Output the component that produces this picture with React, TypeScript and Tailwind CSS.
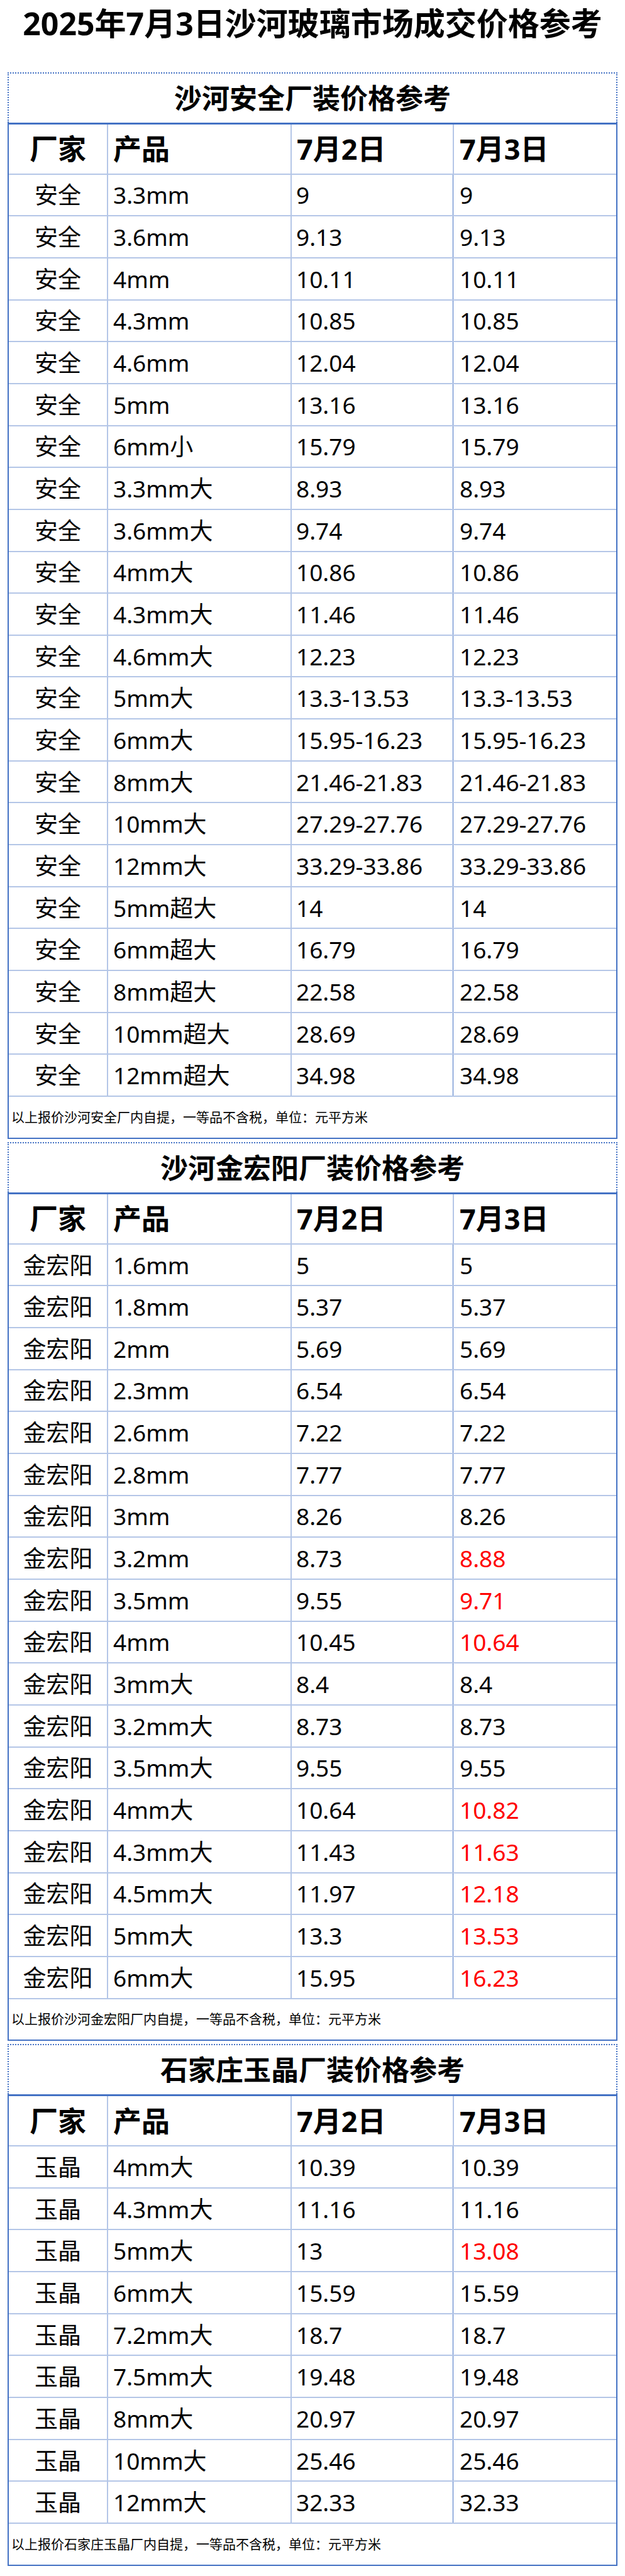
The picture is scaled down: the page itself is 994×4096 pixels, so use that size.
type Row = [string, string, string, boolean?]

interface Section {
  title: string
  maker: string
  note: string
  rows: Row[]
}

const sections: Section[] = [
  {
    title: '沙河安全厂装价格参考',
    maker: '安全',
    note: '以上报价沙河安全厂内自提，一等品不含税，单位：元平方米',
    rows: [
      ['3.3mm', '9', '9'],
      ['3.6mm', '9.13', '9.13'],
      ['4mm', '10.11', '10.11'],
      ['4.3mm', '10.85', '10.85'],
      ['4.6mm', '12.04', '12.04'],
      ['5mm', '13.16', '13.16'],
      ['6mm小', '15.79', '15.79'],
      ['3.3mm大', '8.93', '8.93'],
      ['3.6mm大', '9.74', '9.74'],
      ['4mm大', '10.86', '10.86'],
      ['4.3mm大', '11.46', '11.46'],
      ['4.6mm大', '12.23', '12.23'],
      ['5mm大', '13.3-13.53', '13.3-13.53'],
      ['6mm大', '15.95-16.23', '15.95-16.23'],
      ['8mm大', '21.46-21.83', '21.46-21.83'],
      ['10mm大', '27.29-27.76', '27.29-27.76'],
      ['12mm大', '33.29-33.86', '33.29-33.86'],
      ['5mm超大', '14', '14'],
      ['6mm超大', '16.79', '16.79'],
      ['8mm超大', '22.58', '22.58'],
      ['10mm超大', '28.69', '28.69'],
      ['12mm超大', '34.98', '34.98'],
    ],
  },
  {
    title: '沙河金宏阳厂装价格参考',
    maker: '金宏阳',
    note: '以上报价沙河金宏阳厂内自提，一等品不含税，单位：元平方米',
    rows: [
      ['1.6mm', '5', '5'],
      ['1.8mm', '5.37', '5.37'],
      ['2mm', '5.69', '5.69'],
      ['2.3mm', '6.54', '6.54'],
      ['2.6mm', '7.22', '7.22'],
      ['2.8mm', '7.77', '7.77'],
      ['3mm', '8.26', '8.26'],
      ['3.2mm', '8.73', '8.88', true],
      ['3.5mm', '9.55', '9.71', true],
      ['4mm', '10.45', '10.64', true],
      ['3mm大', '8.4', '8.4'],
      ['3.2mm大', '8.73', '8.73'],
      ['3.5mm大', '9.55', '9.55'],
      ['4mm大', '10.64', '10.82', true],
      ['4.3mm大', '11.43', '11.63', true],
      ['4.5mm大', '11.97', '12.18', true],
      ['5mm大', '13.3', '13.53', true],
      ['6mm大', '15.95', '16.23', true],
    ],
  },
  {
    title: '石家庄玉晶厂装价格参考',
    maker: '玉晶',
    note: '以上报价石家庄玉晶厂内自提，一等品不含税，单位：元平方米',
    rows: [
      ['4mm大', '10.39', '10.39'],
      ['4.3mm大', '11.16', '11.16'],
      ['5mm大', '13', '13.08', true],
      ['6mm大', '15.59', '15.59'],
      ['7.2mm大', '18.7', '18.7'],
      ['7.5mm大', '19.48', '19.48'],
      ['8mm大', '20.97', '20.97'],
      ['10mm大', '25.46', '25.46'],
      ['12mm大', '32.33', '32.33'],
    ],
  },
]

function PriceSection({ section }: { section: Section }) {
  return (
    <div>
      {/* section heading */}
      <div className="h-[80px] border-2 border-b-0 border-dotted border-[#4472c4] flex items-center justify-center text-[44px] font-bold leading-none text-black">
        {section.title}
      </div>

      <div className="border-x-2 border-b-2 border-t-[3px] border-[#4472c4]">
        {/* header */}
        <div className="grid grid-cols-[156px_292px_258px_1fr] h-[80px] border-b-2 border-[#b4c6e7] text-[45px] font-bold leading-none">
          <div className="flex items-center justify-center">厂家</div>
          <div className="flex items-center pl-[8px] border-l-2 border-[#b4c6e7]">产品</div>
          <div className="flex items-center pl-[8px] border-l-2 border-[#b4c6e7]">7月2日</div>
          <div className="flex items-center pl-[9px] border-l-2 border-[#b4c6e7]">7月3日</div>
        </div>

        {section.rows.map(([product, jul2, jul3, up]) => (
          <div
            key={product}
            className="grid grid-cols-[156px_292px_258px_1fr] h-[66.67px] border-b-2 border-[#b4c6e7] text-[37px] leading-none"
          >
            <div className="flex items-center justify-center">{section.maker}</div>
            <div className="flex items-center pl-[8px] border-l-2 border-[#b4c6e7]">{product}</div>
            <div className="flex items-center pl-[7px] border-l-2 border-[#b4c6e7]">{jul2}</div>
            <div
              className={`flex items-center pl-[10px] border-l border-[#4472c4] ${
                up ? 'text-[#ff0000]' : 'text-black'
              }`}
            >
              {jul3}
            </div>
          </div>
        ))}

        {/* note */}
        <div className="h-[64.67px] flex items-center pl-[4px] text-[21px] leading-none">
          {section.note}
        </div>
      </div>
    </div>
  )
}

export default function App() {
  return (
    <div className="w-[994px] bg-white pb-[13px] text-black font-['Noto_Sans','Noto_Sans_CJK_SC',sans-serif]">
      <h1 className="h-[114.6px] pt-[7px] text-center text-[50px] font-bold leading-[60px]">
        2025年7月3日沙河玻璃市场成交价格参考
      </h1>

      <div className="ml-[12px] w-[970px] flex flex-col gap-[5px]">
        {sections.map((s) => (
          <PriceSection key={s.maker} section={s} />
        ))}
      </div>
    </div>
  )
}
